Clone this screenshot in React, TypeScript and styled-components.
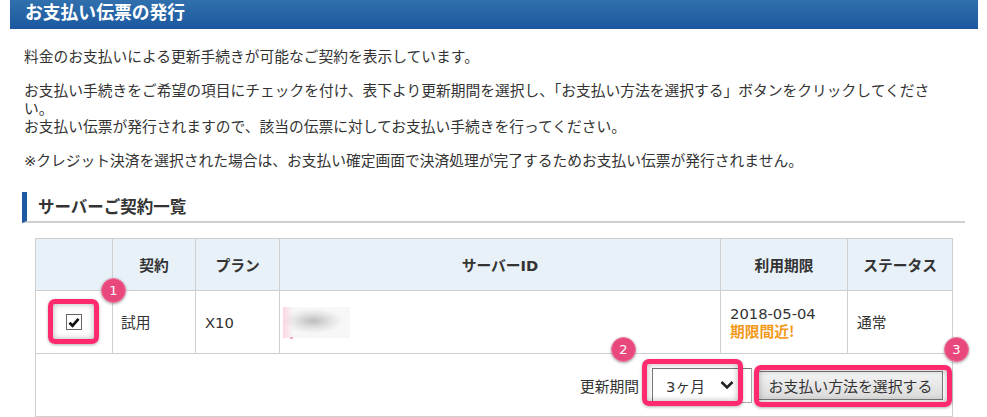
import styled, { createGlobalStyle } from "styled-components";

const GlobalStyle = createGlobalStyle`
  body {
    margin: 0;
    background: #fff;
    color: #333;
    font-family: "DejaVu Sans", "Noto Sans CJK JP", sans-serif;
  }
`;

const Page = styled.div`
  padding: 0 9px 0 10px;
  width: 968px;
`;

const TitleBar = styled.h1`
  margin: 0;
  height: 29px;
  padding-left: 15px;
  background: linear-gradient(#3170ad, #1b589f);
  color: #fff;
  font-family: "Noto Sans CJK JP", sans-serif;
  font-size: 17.8px;
  font-weight: 700;
  line-height: 23px;
  box-sizing: border-box;
`;

const Intro = styled.div`
  padding: 19px 30px 0 14px;
  font-size: 14.75px;
  line-height: 18px;
`;

const Para = styled.p`
  margin: 0 0 16px;
  &:last-child {
    margin-bottom: 0;
  }
`;

const SectionHead = styled.h2`
  margin: 22px 13px 0 12px;
  height: 31px;
  padding-left: 11px;
  border-left: 5px solid #1d5aa3;
  border-bottom: 2px solid #d0d0d0;
  box-sizing: border-box;
  font-family: "Noto Sans CJK JP", sans-serif;
  font-size: 16.5px;
  font-weight: 700;
  line-height: 29px;
  color: #333;
`;

const Table = styled.table`
  margin: 15px 0 0 25px;
  width: 917px;
  border-collapse: collapse;
  table-layout: fixed;
  font-size: 14.75px;
`;

const Th = styled.th`
  height: 51px;
  background: #e8f0f8;
  border: 1px solid #cfcfcf;
  font-weight: 700;
  text-align: center;
  padding: 0;
`;

const Td = styled.td<{ $pad?: number; $center?: boolean }>`
  height: 62px;
  border: 1px solid #cfcfcf;
  padding: 0 0 0 ${(p) => p.$pad ?? 9}px;
  text-align: ${(p) => (p.$center ? "center" : "left")};
  vertical-align: middle;
  line-height: 17px;
`;

const FooterCell = styled.td`
  height: 62px;
  border: 1px solid #cfcfcf;
  padding: 0 9px 0 0;
`;

const Controls = styled.div`
  display: flex;
  justify-content: flex-end;
  align-items: center;
`;

const Label = styled.span`
  margin-right: 13px;
  font-size: 14.75px;
`;

const Highlight = styled.div<{ $t: number; $r: number; $b: number; $l: number }>`
  position: relative;
  display: inline-flex;
  &::after {
    content: "";
    position: absolute;
    top: ${(p) => p.$t}px;
    right: ${(p) => p.$r}px;
    bottom: ${(p) => p.$b}px;
    left: ${(p) => p.$l}px;
    border: 5px solid #ff2a6d;
    border-radius: 7px;
    box-shadow: 0 1px 3px rgba(0, 0, 0, 0.3), inset 0 0 6px rgba(0, 0, 0, 0.3);
    pointer-events: none;
  }
`;

const Badge = styled.span<{ $x: number; $y: number }>`
  position: absolute;
  left: ${(p) => p.$x}px;
  top: ${(p) => p.$y}px;
  width: 25px;
  height: 25px;
  border-radius: 50%;
  background: #e9487c;
  border: 1px solid #f07aa0;
  box-sizing: border-box;
  box-shadow: 0 1px 3px rgba(0, 0, 0, 0.35);
  color: #fff;
  font-family: "DejaVu Sans", sans-serif;
  font-size: 13px;
  line-height: 23px;
  text-align: center;
  z-index: 2;
`;

const Check = styled.span`
  display: inline-flex;
  align-items: center;
  justify-content: center;
  width: 16px;
  height: 16px;
  border: 1px solid #666;
  box-sizing: border-box;
  background: #fff;
`;

const Blur = styled.span`
  position: relative;
  display: block;
  width: 67px;
  height: 31px;
  background: radial-gradient(ellipse 45% 40% at 45% 45%, #bdbdbd 0%, #e4e4e4 60%, #f7f7f7 100%);
  &::before {
    content: "";
    position: absolute;
    left: 0;
    top: 0;
    width: 10px;
    height: 31px;
    background: linear-gradient(90deg, rgba(255, 200, 215, 0.7), rgba(255, 200, 215, 0));
  }
  &::after {
    content: "";
    position: absolute;
    left: 7px;
    top: 30px;
    width: 3px;
    height: 2px;
    background: #f7a8c4;
  }
`;

const Warn = styled.span`
  display: block;
  color: #f39a1b;
  font-weight: 700;
  font-family: "Noto Sans CJK JP", sans-serif;
`;

const Select = styled.div`
  width: 100px;
  height: 35px;
  box-sizing: border-box;
  border: 1px solid #a9a9a9;
  border-top-color: #777;
  border-left-color: #777;
  background: #fff;
  display: flex;
  align-items: center;
  justify-content: space-between;
  padding: 0 17px 0 13px;
  font-size: 14.75px;
`;

const Button = styled.button`
  margin-left: 6px;
  width: 185px;
  height: 29px;
  border: 1px solid #7a7a7a;
  background: linear-gradient(#f4f4f4, #dadada);
  color: #333;
  font-family: "Noto Sans CJK JP", sans-serif;
  font-size: 14.9px;
  padding: 0;
`;

export default function App() {
  return (
    <Page>
      <GlobalStyle />
      <TitleBar>お支払い伝票の発行</TitleBar>
      <Intro>
        <Para>料金のお支払いによる更新手続きが可能なご契約を表示しています。</Para>
        <Para>
          お支払い手続きをご希望の項目にチェックを付け、表下より更新期間を選択し、「お支払い方法を選択する」ボタンをクリックしてください。
          <br />
          お支払い伝票が発行されますので、該当の伝票に対してお支払い手続きを行ってください。
        </Para>
        <Para>
          ※クレジット決済を選択された場合は、お支払い確定画面で決済処理が完了するためお支払い伝票が発行されません。
        </Para>
      </Intro>
      <SectionHead>サーバーご契約一覧</SectionHead>
      <Table>
        <colgroup>
          <col style={{ width: 77 }} />
          <col style={{ width: 83 }} />
          <col style={{ width: 84 }} />
          <col style={{ width: 441 }} />
          <col style={{ width: 127 }} />
          <col style={{ width: 105 }} />
        </colgroup>
        <thead>
          <tr>
            <Th />
            <Th>契約</Th>
            <Th>プラン</Th>
            <Th>サーバーID</Th>
            <Th>利用期限</Th>
            <Th>ステータス</Th>
          </tr>
        </thead>
        <tbody>
          <tr>
            <Td $pad={0} $center>
              <Highlight $t={-15} $r={-17} $b={-14} $l={-18}>
                <Check>
                  <svg width="12" height="11" viewBox="0 0 12 11">
                    <path d="M1.5 5.8 L4.5 8.8 L10.5 1.8" fill="none" stroke="#111" strokeWidth="2.8" />
                  </svg>
                </Check>
                <Badge $x={35} $y={-36}>1</Badge>
              </Highlight>
            </Td>
            <Td $pad={8}>試用</Td>
            <Td>X10</Td>
            <Td $pad={3}>
              <Blur />
            </Td>
            <Td>
              2018-05-04
              <Warn>期限間近!</Warn>
            </Td>
            <Td>通常</Td>
          </tr>
          <tr>
            <FooterCell colSpan={6}>
              <Controls>
                <Label>更新期間</Label>
                <Highlight $t={-9} $r={9} $b={-3} $l={-10}>
                  <Select>
                    <span>3ヶ月</span>
                    <svg width="14" height="10" viewBox="0 0 14 10">
                      <path d="M1.5 2 L7 7.5 L12.5 2" fill="none" stroke="#222" strokeWidth="2.6" />
                    </svg>
                  </Select>
                  <Badge $x={-41} $y={-31}>2</Badge>
                </Highlight>
                <Highlight $t={-6} $r={-9} $b={-7} $l={2}>
                  <Button>お支払い方法を選択する</Button>
                  <Badge $x={192} $y={-34}>3</Badge>
                </Highlight>
              </Controls>
            </FooterCell>
          </tr>
        </tbody>
      </Table>
    </Page>
  );
}
